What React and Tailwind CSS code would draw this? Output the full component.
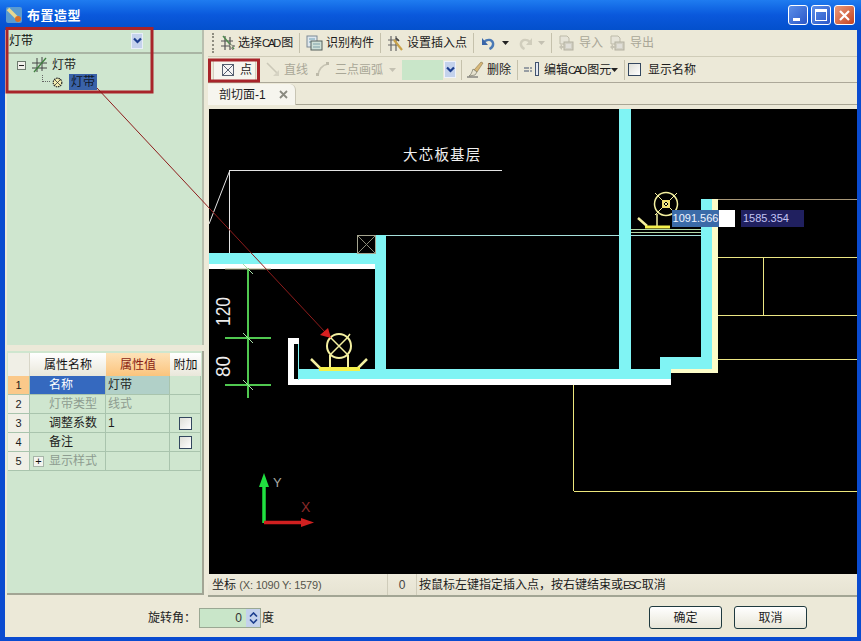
import React from 'react'

const Sep = ({ ml }) => <div className={`w-px h-[20px] bg-[#c5c1ac] shrink-0 ${ml}`} />
const Arrow = ({ ml, dim }) => (
  <svg width="7" height="4" viewBox="0 0 7 4" className={`shrink-0 ${ml}`}><path d="M0 0h7L3.500 4z" fill={dim ? '#c4c1b2' : '#222'} /></svg>
)
const Chevron = () => (
  <svg width="9" height="8" viewBox="0 0 9 8"><path d="M1 1.500l3.500 3.500L8 1.500" fill="none" stroke="#1d3f8f" strokeWidth="2.200" /></svg>
)

const SelectCadIcon = () => (
  <svg width="16" height="16" viewBox="0 0 16 16" className="shrink-0 ml-[6px]">
    <path d="M1 6h12M1 11h14M5 1v14M10 2v13" stroke="#555" strokeWidth="1.200" />
    <path d="M3 1l11 13" stroke="#4d8a4d" strokeWidth="1.400" />
    <path d="M9 9l5 2-2 1 1 3-2-2z" fill="#e9e6c8" stroke="#666" strokeWidth=".6" />
  </svg>
)
const IdentifyIcon = () => (
  <svg width="17" height="16" viewBox="0 0 17 16" className="shrink-0">
    <rect x="1" y="1" width="10" height="11" fill="#dfe8ef" stroke="#7d8a94" />
    <path d="M3 4h6M3 7h6" stroke="#6ea0b4" />
    <rect x="5" y="6" width="11" height="9" fill="#cfe0d8" stroke="#55615c" />
    <path d="M7 9h7M7 12h7" stroke="#7ea0a8" />
  </svg>
)
const InsertIcon = () => (
  <svg width="17" height="17" viewBox="0 0 17 17" className="shrink-0">
    <path d="M1 5h11M1 10h11M4 1v15M9 1v15" stroke="#666" strokeWidth="1.200" />
    <path d="M7 5l8 10" stroke="#c9a24a" strokeWidth="2.200" />
    <path d="M9 3l3 3" stroke="#444" strokeWidth="1.600" />
  </svg>
)
const UndoIcon = ({ dim, flip }) => (
  <svg width="15" height="14" viewBox="0 0 15 14" className={flip ? '-scale-x-100 shrink-0' : 'shrink-0'}>
    <path d="M3 6c3-3 8-3 9 1 .6 3-1.500 5-3.500 6" fill="none" stroke={dim ? '#d0cdbc' : '#4a79b5'} strokeWidth="2.400" />
    <path d="M1 2v7h6z" fill={dim ? '#d0cdbc' : '#3a66a8'} />
  </svg>
)
const FileIcon = () => (
  <svg width="16" height="16" viewBox="0 0 16 16" className="shrink-0">
    <path d="M2 1h7l2 2v6H2z" fill="#e6e4d8" stroke="#bdbaa9" />
    <rect x="6" y="7" width="9" height="8" fill="#d2d0c4" stroke="#b4b1a1" />
    <path d="M8 10h5M8 12h5" stroke="#eeeded" />
    <path d="M1 12l3-3v2h2v2H4v2z" fill="#c6c3b4" />
  </svg>
)
const PointIcon = () => (
  <svg width="12" height="12" viewBox="0 0 12 12" className="shrink-0">
    <rect x=".5" y=".5" width="11" height="11" fill="#f4f4f4" stroke="#555f70" />
    <path d="M1 1l10 10M11 1L1 11" stroke="#555f70" />
  </svg>
)
const LineIcon = () => (
  <svg width="14" height="15" viewBox="0 0 14 15" className="shrink-0">
    <path d="M1 1l11 11" stroke="#cbc8b8" strokeWidth="1.600" />
    <path d="M13 14H7l6-6z" fill="#d6d3c3" />
  </svg>
)
const ArcIcon = () => (
  <svg width="14" height="15" viewBox="0 0 14 15" className="shrink-0">
    <path d="M2 14C2 8 6 3 12 2" fill="none" stroke="#c6c3b3" strokeWidth="1.600" />
    <rect x="0" y="11" width="3" height="3" fill="#bdbaa9" />
    <rect x="10" y="0" width="3" height="3" fill="#bdbaa9" />
  </svg>
)
const BrushIcon = () => (
  <svg width="17" height="17" viewBox="0 0 17 17" className="shrink-0">
    <path d="M7 9l7-8 2 1-6 9z" fill="#d8b878" stroke="#8a744a" strokeWidth=".6" />
    <path d="M6 8l4 3-2 3-6 1c2-1 3-4 4-7z" fill="#e7e3d0" stroke="#7a7868" strokeWidth=".7" />
    <path d="M0 16h11" stroke="#555" />
  </svg>
)
const EditIcon = () => (
  <svg width="16" height="15" viewBox="0 0 16 15" className="shrink-0">
    <path d="M0 6h5M0 9h5M6 6h2M6 9h2" stroke="#42536e" />
    <rect x="11.500" y=".5" width="3" height="13" fill="#e4e9f2" stroke="#42536e" />
  </svg>
)

const CheckBox = ({ cls }) => (
  <div className={`bg-gradient-to-br from-[#dedfd8] to-white border border-[#33475f] ${cls}`} />
)

function TopBar() {
  return (
    <div className="h-[27px] flex items-center border-b border-[#cfccb8] text-[#1c1c1c]">
      <div className="ml-[4px] w-[2px] h-[20px] border-l-2 border-dotted border-[#8f8d80] shrink-0" />
      <SelectCadIcon />
      <span className="ml-[2px] w-[57px] whitespace-nowrap">选择<span className="text-[11px] tracking-[-2px] mr-[2px]">CAD</span>图</span>
      <Sep ml="ml-[4px]" />
      <div className="ml-[6px]"><IdentifyIcon /></div>
      <span className="ml-[3px] w-[48px]">识别构件</span>
      <Sep ml="ml-[6px]" />
      <div className="ml-[6px]"><InsertIcon /></div>
      <span className="ml-[3px] w-[60px]">设置插入点</span>
      <Sep ml="ml-[6px]" />
      <div className="ml-[7px]"><UndoIcon /></div>
      <Arrow ml="ml-[6px]" />
      <div className="ml-[9px]"><UndoIcon dim flip /></div>
      <Arrow ml="ml-[5px]" dim />
      <Sep ml="ml-[6px]" />
      <div className="ml-[6px]"><FileIcon /></div>
      <span className="ml-[5px] w-[24px] text-[#a9a797]">导入</span>
      <div className="ml-[6px]"><FileIcon /></div>
      <span className="ml-[5px] w-[24px] text-[#a9a797]">导出</span>
    </div>
  )
}

function SecondBar() {
  return (
    <div className="h-[26px] flex items-center border-b border-[#aca899] text-[#1c1c1c]">
      <div className="ml-[5px] w-[43px] h-[22px] bg-[#f6f5ee] border border-[#d4d0c0] flex items-center pl-[8px] shrink-0">
        <PointIcon />
        <span className="ml-[6px]">点</span>
      </div>
      <div className="ml-[10px]"><LineIcon /></div>
      <span className="ml-[4px] w-[24px] text-[#a9a797]">直线</span>
      <div className="ml-[8px]"><ArcIcon /></div>
      <span className="ml-[5px] w-[48px] text-[#a9a797]">三点画弧</span>
      <Arrow ml="ml-[6px]" dim />
      <div className="ml-[6px] w-[41px] h-[20px] bg-[#c9e6c9] shrink-0" />
      <div className="ml-px w-[12px] h-[17px] bg-[#c4d2ec] border border-[#eef2fa] flex items-center justify-center shrink-0"><Chevron /></div>
      <Sep ml="ml-[5px]" />
      <div className="ml-[5px]"><BrushIcon /></div>
      <span className="ml-[3px] w-[24px]">删除</span>
      <Sep ml="ml-[6px]" />
      <div className="ml-[6px]"><EditIcon /></div>
      <span className="ml-[4px] w-[65px] whitespace-nowrap">编辑<span className="text-[11px] tracking-[-2px] mr-[2px]">CAD</span>图元</span>
      <Arrow ml="ml-[2px]" />
      <Sep ml="ml-[6px]" />
      <CheckBox cls="ml-[3px] w-[13px] h-[13px] shrink-0" />
      <span className="ml-[7px]">显示名称</span>
    </div>
  )
}

function Tree() {
  return (
    <div className="h-[315px] bg-[#cfe6cf] border-r-2 border-[#b8bfae] flex flex-col">
      <div className="h-[24px] flex items-center border-b-2 border-[#a9b5a4] pl-[2px] pr-[59px]">
        <span className="flex-1 text-[#111]">灯带</span>
        <div className="w-[12px] h-[16px] bg-[#c4d2ec] border border-[#e8eef8] flex items-center justify-center"><Chevron /></div>
      </div>
      <div className="flex items-center h-[18px] mt-[2px] ml-[10px]">
        <div className="w-[9px] h-[9px] bg-[#f0f0ea] border border-[#6d7a6d] flex items-center justify-center"><div className="w-[5px] h-px bg-[#222]" /></div>
        <svg width="16" height="16" viewBox="0 0 16 16" className="ml-[6px]">
          <path d="M0 6h15M0 11h15M5 1v14M10 0v14" stroke="#444" />
          <path d="M2 15L14 1" stroke="#3f7f3f" strokeWidth="1.300" />
        </svg>
        <span className="ml-[4px]">灯带</span>
      </div>
      <div className="flex items-center h-[16px] ml-[35px]">
        <div className="w-[8px] h-[7px] border-l border-b border-dotted border-[#666] -mt-[8px]" />
        <svg width="11" height="11" viewBox="0 0 11 11" className="ml-[2px]">
          <circle cx="5.500" cy="5.500" r="4.300" fill="#f4eeb0" stroke="#222" strokeWidth="1.200" strokeDasharray="1.500 .8" />
          <path d="M2 2l7 7M9 2l-7 7" stroke="#333" strokeWidth=".8" />
        </svg>
        <span className="ml-[6px] w-[28px] h-[16px] leading-[16px] bg-[#3a62a8] text-[#101828] pl-[2px]">灯带</span>
      </div>
    </div>
  )
}

const cell = 'border-r border-b border-[#a9c4ad] flex items-center'

function Row({ n, name, value, dim, active, check, plus }) {
  return (
    <div className="flex h-[19px]">
      <div className={`w-[22px] ${cell} justify-center text-[11px] ${active ? 'bg-[#fbc98a]' : 'bg-[#f0efe6]'}`}>{n}</div>
      <div className={`w-[76px] ${cell} ${active ? 'bg-[#3569bf] text-white' : ''} ${dim ? 'text-[#8d9c90]' : ''}`}>
        {plus ? (
          <div className="ml-[3px] mr-[5px] w-[11px] h-[11px] bg-[#f2f4ee] border border-[#a7b5a8] flex items-center justify-center text-[#111] text-[11px] leading-none">+</div>
        ) : (
          <div className="w-[19px]" />
        )}
        <span>{name}</span>
      </div>
      <div className={`w-[64px] ${cell} pl-[2px] ${active ? 'bg-[#b1d0c8]' : ''} ${dim ? 'text-[#8d9c90]' : ''}`}>{value}</div>
      <div className={`w-[31px] ${cell} justify-center`}>{check && <CheckBox cls="w-[13px] h-[13px]" />}</div>
    </div>
  )
}

function PropGrid() {
  return (
    <div className="flex-1 mt-[6px] bg-[#cfe6cf] border-b-2 border-r-2 border-[#a2a594] pt-[2px] pl-px">
      <div className="flex h-[23px] text-[#111]">
        <div className="w-[22px] bg-[#f0efe6] border-r border-[#d8d6c8]" />
        <div className="w-[76px] bg-gradient-to-b from-white to-[#e9e7da] flex items-center justify-center">属性名称</div>
        <div className="w-[64px] bg-gradient-to-b from-[#fde2b8] to-[#fbc47c] text-[#8a1e14] flex items-center justify-center">属性值</div>
        <div className="w-[31px] bg-gradient-to-b from-white to-[#e9e7da] flex items-center justify-center">附加</div>
      </div>
      <Row n="1" name="名称" value="灯带" active />
      <Row n="2" name="灯带类型" value="线式" dim />
      <Row n="3" name="调整系数" value="1" check />
      <Row n="4" name="备注" check />
      <Row n="5" name="显示样式" dim plus />
    </div>
  )
}

const Fixture = () => (
  <g fill="none" stroke="#f4f0a0">
    <circle cx="339" cy="346" r="12" strokeWidth="2" />
    <path d="M331 338l16 16M347 338l-16 16M350 334l-3 4" strokeWidth="1.500" />
    <path d="M330 355v12M348 355v12" strokeWidth="2" />
    <path d="M311 359l9 9M367 359l-9 9" strokeWidth="2.500" />
    <path d="M319 369h41" stroke="#f4f04c" strokeWidth="4" />
  </g>
)

function Drawing() {
  return (
    <svg viewBox="209 109 648 465" className="block w-full h-full">
      <rect x="209" y="109" width="648" height="465" fill="#000" />
      {/* top text and leader */}
      <text x="403" y="160" fill="#f0f0f0" fontSize="14.500" letterSpacing="1.200" fontFamily="'Noto Sans CJK SC', sans-serif">大芯板基层</text>
      <path d="M230 170.500h272M229.500 170v83M209 224l21-54" stroke="#e4e4e4" fill="none" />
      {/* walls */}
      <rect x="209" y="253" width="166" height="11" fill="#80f4f4" />
      <rect x="209" y="264" width="166" height="5" fill="#fff" />
      <rect x="375" y="235" width="11" height="145" fill="#80f4f4" />
      <rect x="357.500" y="235.500" width="18" height="18" fill="none" stroke="#a5a590" />
      <path d="M358 236l17 17M375 236l-17 17" stroke="#8a8a78" />
      <path d="M386 235.500h315" stroke="#a6e0dc" />
      <path d="M631 229.500h70M631 232.500h70" stroke="#b4d8a8" />
      <rect x="619" y="109" width="12" height="262" fill="#80f4f4" />
      <rect x="298" y="369" width="373" height="10" fill="#80f4f4" />
      <rect x="288" y="338" width="11" height="47" fill="#fff" />
      <rect x="288" y="379" width="383" height="6" fill="#fff" />
      <rect x="294" y="344" width="4" height="35" fill="#000" />
      <rect x="298" y="344" width="1" height="36" fill="#80f4f4" />
      <rect x="660" y="357" width="52" height="12" fill="#80f4f4" />
      <rect x="701" y="199" width="11" height="160" fill="#80f4f4" />
      <rect x="712" y="199" width="6" height="174" fill="#fdfdc8" />
      <rect x="671" y="369" width="47" height="4" fill="#fdfdc8" />
      {/* right side lines */}
      <path d="M718 199.500h139" stroke="#a89878" />
      <path d="M718 257.500h139M718 315.500h139M718 359.500h139M763.500 257v58" stroke="#ece684" />
      <path d="M573.500 385v106M574 491.500h283" stroke="#ece67c" />
      {/* dimensions */}
      <path d="M248 268v130" stroke="#50c850" strokeWidth="2" />
      <path d="M225 338h46M225 385h46" stroke="#50c850" strokeWidth="2" />
      <path d="M225 269h46" stroke="#b0b088" />
      <path d="M243 333l10 10M243 380l10 10M243 264l10 10" stroke="#a8e0a8" />
      <text x="230" y="326" transform="rotate(-90 230 326)" textLength="29" lengthAdjust="spacingAndGlyphs" fill="#ececec" fontSize="21" fontFamily="'Liberation Sans', sans-serif">120</text>
      <text x="230" y="377" transform="rotate(-90 230 377)" textLength="21" lengthAdjust="spacingAndGlyphs" fill="#ececec" fontSize="21" fontFamily="'Liberation Sans', sans-serif">80</text>
      {/* fixtures */}
      <Fixture />
      <g fill="none" stroke="#f4f0a0">
        <circle cx="666" cy="204" r="11.500" strokeWidth="1.500" />
        <path d="M655 193l22 22M677 193l-22 22" strokeWidth="1" />
        <rect x="663" y="201" width="6" height="6" strokeWidth="2" stroke="#f0e070" />
        <path d="M657 214v12" strokeWidth="1.500" />
        <path d="M638 218l9 8" strokeWidth="2.500" />
        <path d="M645 227h25" stroke="#f4f04c" strokeWidth="3" />
      </g>
      {/* axes */}
      <path d="M264 523v-40" stroke="#20e040" strokeWidth="3.500" />
      <path d="M264 473l5 14h-10z" fill="#20e040" />
      <path d="M264 522.500h40" stroke="#d02020" strokeWidth="3.500" />
      <path d="M314 522.500l-13-4.500v9z" fill="#d02020" />
      <text x="273" y="487" fill="#a8a8a0" fontSize="13" fontFamily="'Liberation Sans', sans-serif">Y</text>
      <text x="301" y="512" fill="#8a2828" fontSize="14" fontFamily="'Liberation Sans', sans-serif">X</text>
    </svg>
  )
}

export default function App() {
  return (
    <div className="relative w-[861px] h-[641px] overflow-hidden flex flex-col text-[12px] leading-none bg-[#0a4bd0] font-['Liberation_Sans','Noto_Sans_CJK_SC',sans-serif]">
      {/* title bar */}
      <div className="h-[30px] shrink-0 flex items-center bg-gradient-to-b from-[#1f7cf0] via-[#0a58dc] to-[#0350cc] pl-[6px] pr-[6px]">
        <svg width="16" height="16" viewBox="0 0 16 16">
          <rect width="16" height="16" rx="2" fill="#5b9bd0" />
          <path d="M2 2l12 12" stroke="#e8d890" strokeWidth="3.500" />
          <circle cx="12" cy="12" r="3" fill="#d8702a" />
        </svg>
        <span className="ml-[5px] text-white text-[13px] font-bold tracking-[.5px] flex-1">布置造型</span>
        <div className="flex gap-[3px]">
          <div className="w-[20px] h-[20px] rounded-[3px] border border-white bg-gradient-to-br from-[#5d8fe8] to-[#2b56c8] relative">
            <div className="absolute left-[4px] bottom-[3px] w-[7px] h-[3px] bg-white" />
          </div>
          <div className="w-[20px] h-[20px] rounded-[3px] border border-white bg-gradient-to-br from-[#5d8fe8] to-[#2b56c8] p-[3px]">
            <div className="w-full h-full border border-white border-t-[3px]" />
          </div>
          <div className="w-[21px] h-[20px] rounded-[3px] border border-white bg-gradient-to-br from-[#e89a7a] to-[#c4401c] flex items-center justify-center">
            <svg width="11" height="11" viewBox="0 0 11 11"><path d="M1 1l9 9M10 1l-9 9" stroke="#fff" strokeWidth="2.200" /></svg>
          </div>
        </div>
      </div>

      {/* window body */}
      <div className="flex-1 flex flex-col bg-[#ece9d8] border-l-[5px] border-r-[4px] border-b-[4px] border-[#0a4bd0] text-[#1c1c1c]">
        <div className="h-[568px] flex">
          <div className="w-[197px] ml-[2px] mb-[3px] flex flex-col">
            <Tree />
            <PropGrid />
          </div>
          <div className="flex-1 ml-[4px] flex flex-col">
            <TopBar />
            <SecondBar />
            <div className="h-[26px] relative">
              <div className="h-[22px] flex items-end border-b border-[#a8a594]">
                <div className="w-[88px] h-[21px] bg-[#f6f5ee] border-r border-[#c8c5b4] rounded-tr-[6px] flex items-center pl-[11px] -mb-px">
                  <span>剖切面-1</span>
                  <svg width="9" height="9" viewBox="0 0 9 9" className="ml-[13px]"><path d="M1 1l7 7M8 1L1 8" stroke="#8a8a80" strokeWidth="1.800" /></svg>
                </div>
              </div>
            </div>
            <div className="h-[465px] ml-px"><Drawing /></div>
            <div className="h-[23px] flex items-center border-b-2 border-[#a2a594] text-[#1c1c1c] bg-gradient-to-b from-[#eeebdc] to-[#e6e3d2]">
              <span className="pl-[4px] w-[179px] whitespace-nowrap">坐标 <span className="text-[#55554c] text-[11px] tracking-[-0.2px]">(X: 1090 Y: 1579)</span></span>
              <div className="h-full w-px bg-[#cfccba]" />
              <span className="w-[28px] text-center text-[#444]">0</span>
              <div className="h-full w-px bg-[#cfccba]" />
              <span className="ml-[2px] whitespace-nowrap">按鼠标左键指定插入点，按右键结束或<span className="text-[11px] tracking-[-2px] mr-[2px]">ESC</span>取消</span>
            </div>
          </div>
        </div>

        {/* bottom row */}
        <div className="flex-1 flex items-center">
          <span className="ml-[143px] w-[51px] text-[#222]">旋转角：</span>
          <div className="w-[62px] h-[20px] bg-[#c9e6c9] border border-[#9aa893] flex items-center justify-end">
            <span className="mr-[4px] text-[#333]">0</span>
            <div className="w-[14px] h-[18px] bg-[#c4d2ec] flex flex-col items-center justify-center gap-[2px]">
              <svg width="9" height="5" viewBox="0 0 9 5"><path d="M1 4.500L4.500 1 8 4.500" fill="none" stroke="#1d3f8f" strokeWidth="1.600" /></svg>
              <svg width="9" height="5" viewBox="0 0 9 5"><path d="M1 .5L4.500 4 8 .5" fill="none" stroke="#1d3f8f" strokeWidth="1.600" /></svg>
            </div>
          </div>
          <span className="text-[#222] w-[13px] ml-px">度</span>
          <button className="ml-[374px] w-[73px] h-[23px] rounded-[3px] border border-[#1f3a3f] bg-gradient-to-b from-white to-[#e8e6d8]">确定</button>
          <button className="ml-[12px] w-[73px] h-[23px] rounded-[3px] border border-[#1f3a3f] bg-gradient-to-b from-white to-[#e8e6d8]">取消</button>
        </div>
      </div>

      {/* floating coordinate inputs */}
      <div className="absolute left-[672px] top-[210px] w-[63px] h-[17px] bg-white text-[11px]">
        <div className="w-[47px] h-full bg-[#3b6ba8] text-[#f0f4ff] flex items-center justify-center">1091.566</div>
      </div>
      <div className="absolute left-[741px] top-[210px] w-[63px] h-[17px] bg-[#20205f] text-[#c4c4f4] text-[11px] flex items-center pl-[2px]">1585.354</div>

      {/* red annotations */}
      <svg width="861" height="641" className="absolute inset-0 pointer-events-none">
        <rect x="7" y="28.500" width="145" height="63.500" fill="none" stroke="#a8242a" strokeWidth="3" />
        <rect x="209.500" y="60" width="49" height="21" fill="none" stroke="#a8242a" strokeWidth="3" />
        <path d="M97 88L325 332" stroke="#8e1c1c" strokeWidth="1" />
        <path d="M331 338l-3-10-8 7z" fill="#d82020" />
      </svg>
    </div>
  )
}
